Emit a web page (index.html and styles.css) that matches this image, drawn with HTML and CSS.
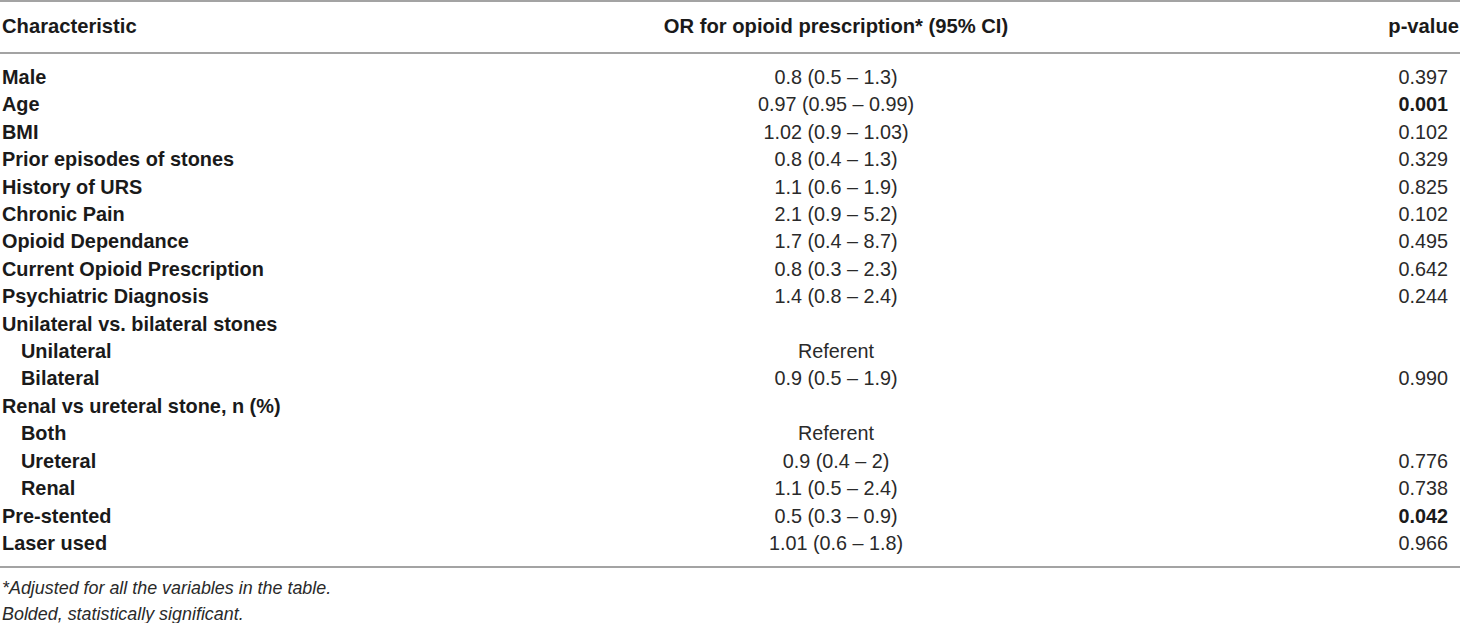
FILE: index.html
```html
<!DOCTYPE html>
<html>
<head>
<meta charset="utf-8">
<link rel="stylesheet" href="styles.css">
</head>
<body>
<div class="wrap">
<table class="tbl">
  <colgroup>
    <col class="c1"><col class="c2"><col class="c3">
  </colgroup>
  <thead>
    <tr>
      <th class="left">Characteristic</th>
      <th class="mid">OR for opioid prescription* (95% CI)</th>
      <th class="right">p-value</th>
    </tr>
  </thead>
  <tbody>
    <tr class="first"><td class="lbl">Male</td><td class="mid">0.8 (0.5 – 1.3)</td><td class="pv">0.397</td></tr>
    <tr><td class="lbl">Age</td><td class="mid">0.97 (0.95 – 0.99)</td><td class="pv sig">0.001</td></tr>
    <tr><td class="lbl">BMI</td><td class="mid">1.02 (0.9 – 1.03)</td><td class="pv">0.102</td></tr>
    <tr><td class="lbl">Prior episodes of stones</td><td class="mid">0.8 (0.4 – 1.3)</td><td class="pv">0.329</td></tr>
    <tr><td class="lbl">History of URS</td><td class="mid">1.1 (0.6 – 1.9)</td><td class="pv">0.825</td></tr>
    <tr><td class="lbl">Chronic Pain</td><td class="mid">2.1 (0.9 – 5.2)</td><td class="pv">0.102</td></tr>
    <tr><td class="lbl">Opioid Dependance</td><td class="mid">1.7 (0.4 – 8.7)</td><td class="pv">0.495</td></tr>
    <tr><td class="lbl">Current Opioid Prescription</td><td class="mid">0.8 (0.3 – 2.3)</td><td class="pv">0.642</td></tr>
    <tr><td class="lbl">Psychiatric Diagnosis</td><td class="mid">1.4 (0.8 – 2.4)</td><td class="pv">0.244</td></tr>
    <tr><td class="lbl">Unilateral vs. bilateral stones</td><td class="mid"></td><td class="pv"></td></tr>
    <tr><td class="lbl sub">Unilateral</td><td class="mid">Referent</td><td class="pv"></td></tr>
    <tr><td class="lbl sub">Bilateral</td><td class="mid">0.9 (0.5 – 1.9)</td><td class="pv">0.990</td></tr>
    <tr><td class="lbl">Renal vs ureteral stone, n (%)</td><td class="mid"></td><td class="pv"></td></tr>
    <tr><td class="lbl sub">Both</td><td class="mid">Referent</td><td class="pv"></td></tr>
    <tr><td class="lbl sub">Ureteral</td><td class="mid">0.9 (0.4 – 2)</td><td class="pv">0.776</td></tr>
    <tr><td class="lbl sub">Renal</td><td class="mid">1.1 (0.5 – 2.4)</td><td class="pv">0.738</td></tr>
    <tr><td class="lbl">Pre-stented</td><td class="mid">0.5 (0.3 – 0.9)</td><td class="pv sig">0.042</td></tr>
    <tr class="last"><td class="lbl">Laser used</td><td class="mid">1.01 (0.6 – 1.8)</td><td class="pv">0.966</td></tr>
  </tbody>
</table>
<div class="notes">
  <p class="note">*Adjusted for all the variables in the table.</p>
  <p class="note">Bolded, statistically significant.</p>
</div>
</div>
</body>
</html>
```

FILE: styles.css
```css
html, body {
  margin: 0;
  padding: 0;
  background: #ffffff;
}
body {
  font-family: "Liberation Sans", Arial, Helvetica, sans-serif;
  font-size: 19.8px;
  color: #1f1f1f;
}
.wrap {
  width: 1460px;
}
.tbl {
  width: 1460px;
  border-collapse: collapse;
  border-top: 2px solid #a3a3a3;
  border-bottom: 2px solid #a3a3a3;
}
.c1 { width: 600px; }
.c2 { width: 472px; }
.c3 { width: 388px; }
.tbl thead tr {
  border-bottom: 2px solid #a3a3a3;
}
.tbl th {
  height: 48px;
  padding: 0 0 2px 0;
  font-size: 20.2px;
  font-weight: bold;
  color: #1a1a1a;
  vertical-align: middle;
  line-height: 22px;
}
.tbl th.left { text-align: left; padding-left: 2px; }
.tbl th.mid { text-align: center; }
.tbl th.right { text-align: right; padding-right: 1px; }
.tbl td {
  padding: 0;
  height: 27.4px;
  line-height: 27.4px;
  vertical-align: middle;
  white-space: nowrap;
}
.tbl tr.first td { padding-top: 10px; }
.tbl tr.last td { padding-bottom: 9px; }
.lbl {
  font-size: 19.9px;
  font-weight: bold;
  color: #1a1a1a;
  padding-left: 2px !important;
}
.lbl.sub {
  padding-left: 21px !important;
}
.mid {
  text-align: center;
  color: #2a2a2a;
}
.pv {
  text-align: right;
  padding-right: 12px !important;
  color: #2a2a2a;
}
.pv.sig {
  font-weight: bold;
  color: #1a1a1a;
}
.notes {
  padding-top: 7px;
}
.note {
  margin: 0;
  padding-left: 2px;
  font-size: 17.9px;
  font-style: italic;
  line-height: 26px;
  color: #2a2a2a;
}
```
